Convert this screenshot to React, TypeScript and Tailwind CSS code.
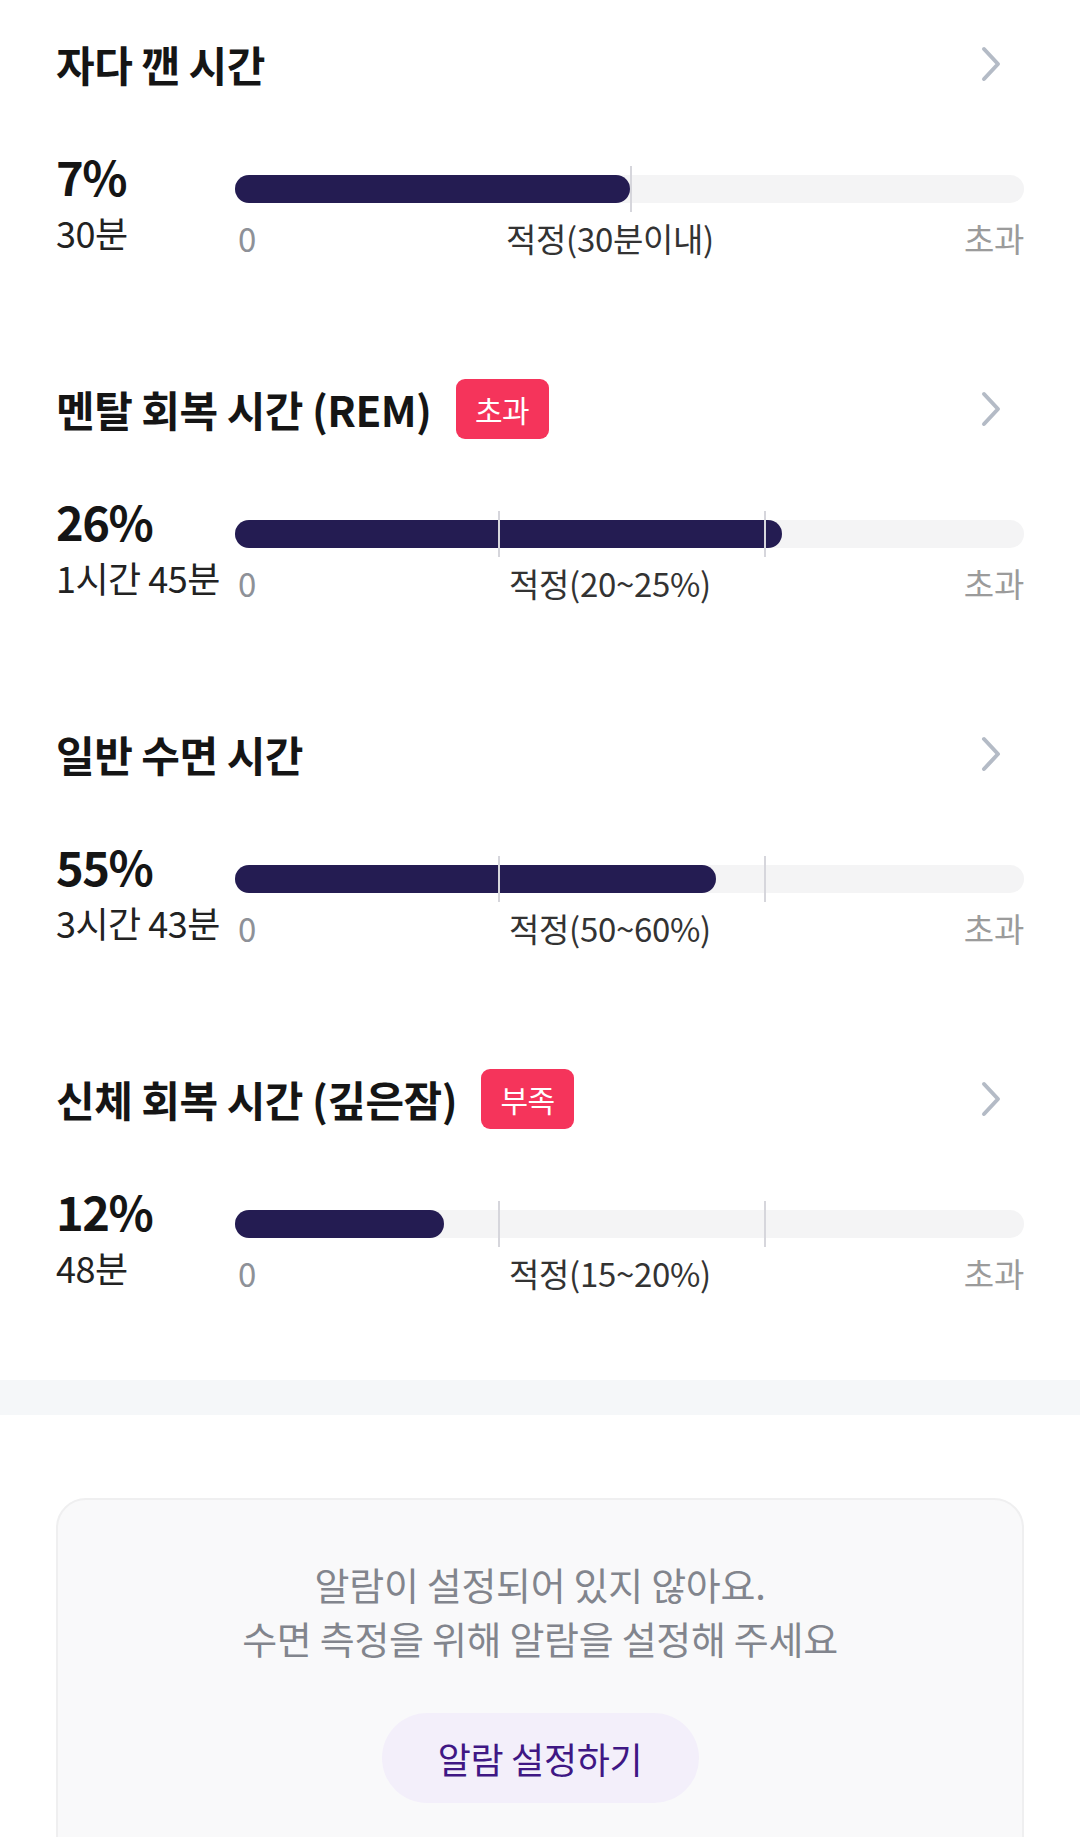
type Stage = {
  title: string
  badge?: string
  percent: string
  duration: string
  fill: number
  markers: number[]
  range: string
}

// 수면 단계별 데이터
const stages: Stage[] = [
  { title: '자다 깬 시간', percent: '7%', duration: '30분', fill: 50, markers: [50], range: '적정(30분이내)' },
  { title: '멘탈 회복 시간 (REM)', badge: '초과', percent: '26%', duration: '1시간 45분', fill: 69.3, markers: [33.3, 67], range: '적정(20~25%)' },
  { title: '일반 수면 시간', percent: '55%', duration: '3시간 43분', fill: 61, markers: [33.3, 67], range: '적정(50~60%)' },
  { title: '신체 회복 시간 (깊은잠)', badge: '부족', percent: '12%', duration: '48분', fill: 26.5, markers: [33.3, 67], range: '적정(15~20%)' },
]

function Chevron() {
  return (
    <svg width="20" height="36" viewBox="0 0 20 36" className="mr-[23px]">
      <path d="M3 3 L17 18 L3 33" fill="none" stroke="#b4bbc6" strokeWidth="4" strokeLinecap="round" strokeLinejoin="round" />
    </svg>
  )
}

function StageRow({ stage }: { stage: Stage }) {
  return (
    <div className="h-[345px] px-[56px] pt-[34px]">
      {/* 제목 */}
      <div className="flex h-[60px] items-center justify-between">
        <div className="flex items-center gap-[24px]">
          <h3 className="text-[42px] font-semibold leading-none tracking-[-0.5px] text-[#151515]">{stage.title}</h3>
          {stage.badge && (
            <span className="flex h-[60px] w-[93px] items-center justify-center rounded-[9px] bg-[#f5345b] text-[30px] tracking-[-0.5px] text-white">
              {stage.badge}
            </span>
          )}
        </div>
        <Chevron />
      </div>

      {/* 수치 + 막대 */}
      <div className="mt-[56px] flex">
        <div className="w-[179px] shrink-0">
          <div className="text-[47px] font-bold leading-[52px] tracking-[-1.5px] text-[#151515]">{stage.percent}</div>
          <div className="mt-[8px] whitespace-nowrap text-[36px] leading-[44px] tracking-[-0.5px] text-[#222]">{stage.duration}</div>
        </div>
        <div className="flex-1">
          <div className="relative mt-[25px] h-[28px] rounded-full bg-[#f4f4f5]">
            <div className="h-full rounded-full bg-[#241c52]" style={{ width: `${stage.fill}%` }} />
            {stage.markers.map((m) => (
              <div
                key={m}
                className="absolute top-[-9px] h-[46px] w-[2px] bg-[#d6d6dc]"
                style={{ left: `${m}%` }}
              />
            ))}
          </div>
          <div className="mt-[15px] flex justify-between text-[33px] leading-[40px] tracking-[-0.3px]">
            <span className="pl-[3px] text-[#8e9198]">0</span>
            <span className="text-[#333]">{stage.range}</span>
            <span className="text-[#9b9b9b]">초과</span>
          </div>
        </div>
      </div>
    </div>
  )
}

export default function App() {
  return (
    <div className="min-h-screen bg-white font-['Noto_Sans_CJK_KR','Noto_Sans',sans-serif]">
      {stages.map((s) => (
        <StageRow key={s.title} stage={s} />
      ))}

      <div className="h-[35px] bg-[#f5f7f9]" />

      {/* 알람 안내 카드 */}
      <div className="px-[56px] pt-[83px]">
        <div className="flex flex-col items-center rounded-[30px] border-2 border-[#efeff0] bg-[#f9f9fa] pb-[80px] pt-[57px]">
          <p className="text-center text-[38px] leading-[54px] tracking-[-0.3px] text-[#82858d]">
            알람이 설정되어 있지 않아요.
            <br />
            수면 측정을 위해 알람을 설정해 주세요
          </p>
          <button className="mt-[48px] h-[90px] w-[317px] rounded-full bg-[#f3effa] text-[36px] tracking-[-0.3px] text-[#3f1784]">
            알람 설정하기
          </button>
        </div>
      </div>
    </div>
  )
}
